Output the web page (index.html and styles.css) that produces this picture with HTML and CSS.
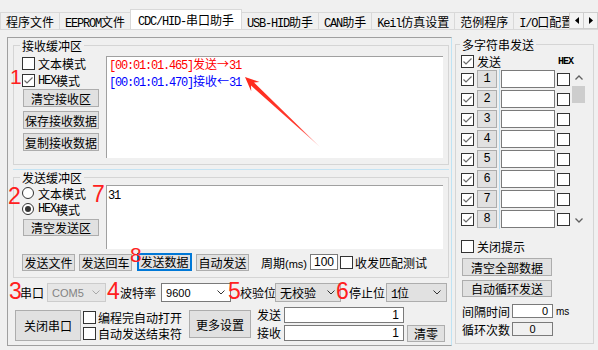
FILE: index.html
```html
<!DOCTYPE html>
<html lang="zh-CN">
<head>
<meta charset="utf-8">
<title>CDC/HID-串口助手</title>
<link rel="stylesheet" href="styles.css">
</head>
<body>
<div class="app">
  <div class="tabs">
    <div class="tab">程序文件</div>
    <div class="tab"><span class="a">EEPROM</span>文件</div>
    <div class="tab active"><span class="a">CDC/HID-</span>串口助手</div>
    <div class="tab"><span class="a">USB-HID</span>助手</div>
    <div class="tab"><span class="a">CAN</span>助手</div>
    <div class="tab"><span class="a">Keil</span>仿真设置</div>
    <div class="tab">范例程序</div>
    <div class="tab"><span class="a">I/O</span>口配置</div>
    <div class="tab-scroll">
      <span class="ts-btn"><svg width="4" height="7" viewBox="0 0 4 7"><path d="M4 0 L0 3.5 L4 7 Z" fill="#000"/></svg></span>
      <span class="ts-btn"><svg width="4" height="7" viewBox="0 0 4 7"><path d="M0 0 L4 3.5 L0 7 Z" fill="#000"/></svg></span>
    </div>
  </div>

  <div class="main">
    <div class="left">
      <div class="group recv">
        <div class="group-title">接收缓冲区</div>
        <div class="group-body">
          <div class="side">
            <div class="opt"><span class="cb"></span>文本模式</div>
            <div class="opt"><span class="cb"><svg width="11" height="11" viewBox="0 0 11 11"><path d="M1.5 5.5 L4 8 L9.5 2.5" fill="none" stroke="#6a6a6a" stroke-width="1.2"/></svg></span><span class="a">HEX</span>模式</div>
            <button class="btn side-btn">清空接收区</button>
            <button class="btn side-btn">保存接收数据</button>
            <button class="btn side-btn">复制接收数据</button>
          </div>
          <div class="text-area recv-area">
            <div class="line first red"><span class="ts">[00:01:01.465]</span>发送→<span class="ts">31</span></div>
            <div class="line blue"><span class="ts">[00:01:01.470]</span>接收←<span class="ts">31</span></div>
            <svg class="arrow" width="90" height="78" viewBox="0 0 90 78">
              <defs>
                <linearGradient id="ag" x1="0" y1="0" x2="1" y2="1">
                  <stop offset="0" stop-color="#ff2a1c"/>
                  <stop offset="0.7" stop-color="#ff3a2e"/>
                  <stop offset="1" stop-color="#ffb3b0"/>
                </linearGradient>
              </defs>
              <path d="M8 2 L22.5 7 L17 7.6 L83 72 L14 10.6 L14.2 16.2 Z" fill="url(#ag)"/>
            </svg>
          </div>
        </div>
      </div>

      <div class="split"></div>

      <div class="group send">
        <div class="group-title">发送缓冲区</div>
        <div class="group-body">
          <div class="side">
            <div class="opt"><span class="rb"></span>文本模式</div>
            <div class="opt"><span class="rb on"></span><span class="a">HEX</span>模式</div>
            <button class="btn side-btn clear-send">清空发送区</button>
          </div>
          <div class="text-area send-area"><span class="a">31</span></div>
        </div>
        <div class="send-actions">
          <button class="btn act-btn">发送文件</button>
          <button class="btn act-btn">发送回车</button>
          <button class="btn act-btn focus">发送数据</button>
          <button class="btn act-btn">自动发送</button>
          <span class="period">周期<span class="small">(ms)</span></span>
          <span class="edit period-input">100</span>
          <span class="opt match"><span class="cb"></span>收发匹配测试</span>
        </div>
      </div>

      <div class="port-row">
        <span class="lbl l-port">串口</span>
        <span class="combo disabled c-port"><span class="cv">COM5</span><svg width="8" height="5" viewBox="0 0 8 5"><path d="M0.5 0.5 L4 4 L7.5 0.5" fill="none" stroke="#a8a8a8"/></svg></span>
        <span class="lbl l-baud">波特率</span>
        <span class="combo white c-baud"><span class="cv">9600</span><svg width="8" height="5" viewBox="0 0 8 5"><path d="M0.5 0.5 L4 4 L7.5 0.5" fill="none" stroke="#333"/></svg></span>
        <span class="lbl l-parity">校验位</span>
        <span class="combo c-parity"><span>无校验</span><svg width="8" height="5" viewBox="0 0 8 5"><path d="M0.5 0.5 L4 4 L7.5 0.5" fill="none" stroke="#333"/></svg></span>
        <span class="lbl l-stop">停止位</span>
        <span class="combo c-stop"><span><span class="a">1</span>位</span><svg width="8" height="5" viewBox="0 0 8 5"><path d="M0.5 0.5 L4 4 L7.5 0.5" fill="none" stroke="#333"/></svg></span>
      </div>

      <div class="ctrl-row">
        <button class="btn close-btn">关闭串口</button>
        <div class="cb-col">
          <div class="opt"><span class="cb"></span>编程完自动打开</div>
          <div class="opt"><span class="cb"></span>自动发送结束符</div>
        </div>
        <button class="btn more-btn">更多设置</button>
        <div class="counters">
          <span class="clbl">发送</span>
          <span class="edit count">1</span>
          <span></span>
          <span class="clbl">接收</span>
          <span class="edit count">1</span>
          <button class="btn zero-btn">清零</button>
        </div>
      </div>

      <span class="anno an1">1</span>
      <span class="anno an2">2</span>
      <span class="anno an7">7</span>
      <span class="anno an8">8</span>
      <span class="anno an3">3</span>
      <span class="anno an4">4</span>
      <span class="anno an5">5</span>
      <span class="anno an6">6</span>
    </div>

    <div class="group multi">
      <div class="group-title">多字符串发送</div>
      <div class="ms-head">
        <span class="cb"><svg width="11" height="11" viewBox="0 0 11 11"><path d="M1.5 5.5 L4 8 L9.5 2.5" fill="none" stroke="#6a6a6a" stroke-width="1.2"/></svg></span>
        <span class="ms-send">发送</span>
        <span class="hex">HEX</span>
      </div>
      <div class="ms-body">
        <div class="ms-rows">
          <div class="ms-row"><span class="cb"><svg width="11" height="11" viewBox="0 0 11 11"><path d="M1.5 5.5 L4 8 L9.5 2.5" fill="none" stroke="#6a6a6a" stroke-width="1.2"/></svg></span><button class="btn num">1</button><span class="ms-cell"><span class="edit ms-input"></span></span><span class="cb hexcb"></span></div>
          <div class="ms-row"><span class="cb"><svg width="11" height="11" viewBox="0 0 11 11"><path d="M1.5 5.5 L4 8 L9.5 2.5" fill="none" stroke="#6a6a6a" stroke-width="1.2"/></svg></span><button class="btn num">2</button><span class="ms-cell"><span class="edit ms-input"></span></span><span class="cb hexcb"></span></div>
          <div class="ms-row"><span class="cb"><svg width="11" height="11" viewBox="0 0 11 11"><path d="M1.5 5.5 L4 8 L9.5 2.5" fill="none" stroke="#6a6a6a" stroke-width="1.2"/></svg></span><button class="btn num">3</button><span class="ms-cell"><span class="edit ms-input"></span></span><span class="cb hexcb"></span></div>
          <div class="ms-row"><span class="cb"><svg width="11" height="11" viewBox="0 0 11 11"><path d="M1.5 5.5 L4 8 L9.5 2.5" fill="none" stroke="#6a6a6a" stroke-width="1.2"/></svg></span><button class="btn num">4</button><span class="ms-cell"><span class="edit ms-input"></span></span><span class="cb hexcb"></span></div>
          <div class="ms-row"><span class="cb"><svg width="11" height="11" viewBox="0 0 11 11"><path d="M1.5 5.5 L4 8 L9.5 2.5" fill="none" stroke="#6a6a6a" stroke-width="1.2"/></svg></span><button class="btn num">5</button><span class="ms-cell"><span class="edit ms-input"></span></span><span class="cb hexcb"></span></div>
          <div class="ms-row"><span class="cb"><svg width="11" height="11" viewBox="0 0 11 11"><path d="M1.5 5.5 L4 8 L9.5 2.5" fill="none" stroke="#6a6a6a" stroke-width="1.2"/></svg></span><button class="btn num">6</button><span class="ms-cell"><span class="edit ms-input"></span></span><span class="cb hexcb"></span></div>
          <div class="ms-row"><span class="cb"><svg width="11" height="11" viewBox="0 0 11 11"><path d="M1.5 5.5 L4 8 L9.5 2.5" fill="none" stroke="#6a6a6a" stroke-width="1.2"/></svg></span><button class="btn num">7</button><span class="ms-cell"><span class="edit ms-input"></span></span><span class="cb hexcb"></span></div>
          <div class="ms-row"><span class="cb"><svg width="11" height="11" viewBox="0 0 11 11"><path d="M1.5 5.5 L4 8 L9.5 2.5" fill="none" stroke="#6a6a6a" stroke-width="1.2"/></svg></span><button class="btn num">8</button><span class="ms-cell"><span class="edit ms-input"></span></span><span class="cb hexcb"></span></div>
        </div>
        <div class="ms-scroll">
          <span class="sb-btn"><svg width="8" height="5" viewBox="0 0 8 5"><path d="M0.5 4.5 L4 1 L7.5 4.5" fill="none" stroke="#606060" stroke-width="1.3"/></svg></span>
          <span class="sb-thumb"></span>
          <span class="sb-space"></span>
          <span class="sb-btn"><svg width="8" height="5" viewBox="0 0 8 5"><path d="M0.5 0.5 L4 4 L7.5 0.5" fill="none" stroke="#606060" stroke-width="1.3"/></svg></span>
        </div>
      </div>
      <div class="opt tip"><span class="cb"></span>关闭提示</div>
      <button class="btn wide-btn">清空全部数据</button>
      <button class="btn wide-btn second">自动循环发送</button>
      <div class="ms-field first">
        <span class="flbl">间隔时间</span>
        <span class="edit fval">0</span>
        <span class="unit">ms</span>
      </div>
      <div class="ms-field">
        <span class="flbl">循环次数</span>
        <span class="edit fval readonly">0</span>
      </div>
    </div>
  </div>
</div>
</body>
</html>
```

FILE: styles.css
```css
* { box-sizing: border-box; }
html, body { margin: 0; padding: 0; }
body {
  width: 598px;
  height: 350px;
  overflow: hidden;
  background: #f0f0f0;
  font-family: "Noto Sans CJK SC", "Liberation Sans", sans-serif;
  font-size: 12px;
  color: #000;
}
.app { width: 598px; height: 350px; }

.a {
  font-family: "Liberation Mono", "Noto Sans CJK SC", monospace;
  font-size: 12px;
  letter-spacing: -1.2px;
  line-height: 1;
}

/* ---------- tabs ---------- */
.tabs {
  position: relative;
  height: 30px;
  border-bottom: 1px solid #d9d9d9;
  display: flex;
  align-items: flex-end;
  overflow: hidden;
}
.tab {
  flex: none;
  height: 18px;
  margin: 0 -1px -1px 0;
  padding: 0 5px;
  border: 1px solid #d9d9d9;
  border-bottom: none;
  background: #f0f0f0;
  line-height: 17px;
  white-space: nowrap;
}
.tab.active {
  height: 21px;
  padding: 0 7px;
  background: #fff;
  line-height: 19px;
  position: relative;
  z-index: 1;
}
.tab-scroll {
  position: absolute;
  right: 0;
  top: 12px;
  display: flex;
  z-index: 2;
}
.ts-btn {
  width: 15px;
  height: 17px;
  margin-left: -1px;
  border: 1px solid #cfcfcf;
  background: #f4f4f4;
  display: flex;
  align-items: center;
  justify-content: center;
}

/* ---------- layout ---------- */
.main {
  display: flex;
  align-items: flex-start;
  padding: 7px 0 0 7px;
}
.left {
  position: relative;
  flex: none;
  width: 445px;
  height: 309px;
  border: 1px solid #a0a0a0;
  border-right-color: #bfe3f4;
  padding: 0 2px 0 5px;
  display: flex;
  flex-direction: column;
}

.group {
  flex: none;
  border: 1px solid #d5d5d5;
  display: flex;
  flex-direction: column;
}
.group-title {
  align-self: flex-start;
  height: 15px;
  margin: -8px 0 -7px 6px;
  padding: 0 2px;
  background: #f0f0f0;
  line-height: 15px;
  white-space: nowrap;
  position: relative;
}
.group-body {
  display: flex;
  padding: 10px 5px 0 8px;
}

.side {
  flex: none;
  width: 77px;
  margin-right: 7px;
  display: flex;
  flex-direction: column;
}
.recv .side { margin-top: -1px; }

.opt {
  display: flex;
  align-items: center;
  height: 17px;
  white-space: nowrap;
}
.cb {
  flex: none;
  width: 13px;
  height: 13px;
  margin-right: 3px;
  border: 1px solid #333;
  background: #fff;
  display: flex;
}
.rb {
  flex: none;
  width: 12px;
  height: 12px;
  margin-right: 4px;
  border: 1px solid #333;
  border-radius: 50%;
  background: #fff;
  display: flex;
  align-items: center;
  justify-content: center;
}
.rb.on::after {
  content: "";
  width: 6px;
  height: 6px;
  border-radius: 50%;
  background: #333;
}

.btn {
  font-family: "Noto Sans CJK SC", "Liberation Sans", sans-serif;
  font-size: 12px;
  color: #000;
  border: 1px solid #adadad;
  background: #e1e1e1;
  padding: 0;
  margin: 0;
  line-height: 15px;
  white-space: nowrap;
}
.side-btn {
  width: 76px;
  height: 18px;
  margin-left: 1px;
}
.side-btn + .side-btn { margin-top: 4px; }

.text-area {
  flex: 1;
  position: relative;
  background: #fff;
  border-top: 1px solid #a0a0a0;
  border-left: 1px solid #a0a0a0;
}

/* receive */
.recv { width: 436px; height: 120px; margin-top: 7px; }
.recv-area { height: 102px; padding-left: 2px; }
.line { height: 17px; line-height: 17px; white-space: nowrap; }
.line.first { margin-top: -2px; }
.ts {
  font-family: "Liberation Mono", monospace;
  font-size: 12px;
  letter-spacing: -1.2px;
  line-height: 1;
}
.red { color: #ff0000; }
.blue { color: #0000ff; }
.arrow { position: absolute; left: 130px; top: 18px; }

.split {
  flex: none;
  width: 436px;
  height: 1px;
  margin-top: 4px;
  background: #c4e3f3;
}

/* send */
.send { width: 436px; height: 101px; margin-top: 7px; }
.send .group-body { padding-top: 7px; }
.send .opt { height: 16px; }
.send .side-btn.clear-send { margin-top: 2px; height: 17px; }
.send-area { height: 64px; padding-left: 1px; line-height: 16px; }

.send-actions {
  display: flex;
  align-items: center;
  height: 18px;
  margin-top: 4px;
  padding-left: 8px;
}
.act-btn { width: 53px; height: 17px; margin-right: 4px; }
.act-btn.focus {
  width: 55px;
  height: 18px;
  margin-left: 1px;
  border: 2px solid #0078d7;
  line-height: 14px;
}
.period { margin-left: 8px; white-space: nowrap; }
.small {
  font-family: "Liberation Sans", sans-serif;
  font-size: 11px;
}
.edit {
  display: block;
  background: #fff;
  border: 1px solid #7a7a7a;
}
.period-input {
  width: 28px;
  height: 16px;
  margin-left: 3px;
  font-family: "Liberation Sans", sans-serif;
  font-size: 12px;
  line-height: 14px;
  text-align: center;
}
.match { margin-left: 2px; }
.match .cb { margin-right: 2px; }

/* port row */
.port-row {
  display: flex;
  align-items: center;
  height: 19px;
  margin-top: 5px;
  padding-left: 7px;
  white-space: nowrap;
}
.combo {
  flex: none;
  height: 19px;
  display: flex;
  align-items: center;
  justify-content: space-between;
  padding: 0 5px 0 4px;
  border: 1px solid #adadad;
  background: #e1e1e1;
}
.combo.disabled { background: #e6e6e6; border-color: #cccccc; color: #838383; }
.combo.white { background: #fff; border-color: #7a7a7a; }
.cv { font-family: "Liberation Sans", sans-serif; font-size: 11px; }
.l-port { margin-right: 3px; }
.c-port { width: 59px; }
.l-baud { margin-left: 14px; margin-right: 5px; }
.c-baud { width: 70px; }
.l-parity { margin-left: 9px; margin-right: -1px; }
.c-parity { width: 66px; }
.l-stop { margin-left: 8px; margin-right: 1px; }
.c-stop { width: 61px; }

/* control row */
.ctrl-row {
  display: flex;
  align-items: flex-start;
  margin-top: 5px;
  padding-left: 2px;
}
.close-btn { width: 66px; height: 31px; margin-top: 3px; }
.cb-col { margin: 2px 0 0 2px; }
.cb-col .opt { height: 16px; }
.cb-col .cb { margin-right: 2px; }
.more-btn { width: 62px; height: 28px; margin: 3px 0 0 7px; }
.counters {
  display: grid;
  grid-template-columns: 24px 120px 38px;
  grid-template-rows: 16px 17px;
  column-gap: 3px;
  row-gap: 2px;
  margin-left: 6px;
}
.clbl { line-height: 16px; }
.count {
  height: 16px;
  padding-right: 4px;
  text-align: right;
  font-family: "Liberation Sans", sans-serif;
  font-size: 12px;
  line-height: 14px;
}
.zero-btn { width: 38px; height: 17px; }

/* annotations */
.anno {
  position: absolute;
  color: #ff2020;
  font-family: "Liberation Sans", sans-serif;
  font-size: 23px;
  line-height: 23px;
}
.an1 { left: 2px; top: 28px; font-size: 21px; line-height: 21px; }
.an2 { left: 0; top: 147px; }
.an7 { left: 84px; top: 145px; }
.an8 { left: 122px; top: 206px; font-size: 21px; line-height: 21px; }
.an3 { left: 1px; top: 242px; }
.an4 { left: 99px; top: 242px; }
.an5 { left: 220px; top: 242px; }
.an6 { left: 328px; top: 242px; }

/* multi-string panel */
.multi {
  width: 139px;
  height: 300px;
  margin: 7px 0 0 3px;
  padding-left: 5px;
}
.multi .group-title { margin-left: -1px; }
.ms-head {
  display: flex;
  align-items: center;
  width: 112px;
  height: 13px;
  margin-top: 10px;
}
.ms-send { line-height: 13px; }
.hex {
  margin-left: auto;
  font-family: "Liberation Mono", monospace;
  font-weight: bold;
  font-size: 10px;
  letter-spacing: -1px;
}
.ms-body { display: flex; margin-top: 1px; }
.ms-rows { display: flex; flex-direction: column; }
.ms-row { display: flex; align-items: center; height: 20px; }
.num {
  width: 20px;
  height: 18px;
  margin-right: 2px;
  font-family: "Liberation Mono", monospace;
  font-size: 12px;
}
.ms-cell {
  display: flex;
  align-items: center;
  height: 20px;
  padding-left: 1px;
  border-left: 1px solid #b7dcf0;
}
.ms-input { width: 54px; height: 18px; }
.hexcb { margin: 0 0 0 2px; }
.ms-scroll {
  display: flex;
  flex-direction: column;
  width: 13px;
  height: 160px;
  margin-left: 2px;
}
.sb-btn {
  height: 17px;
  display: flex;
  align-items: center;
  justify-content: center;
}
.sb-thumb { height: 17px; background: #cdcdcd; }
.sb-space { flex: 1; }

.tip { margin-top: 9px; height: 16px; }
.wide-btn { width: 90px; height: 18px; margin: 4px 0 0 1px; }
.wide-btn.second { height: 17px; }
.ms-field {
  display: flex;
  align-items: center;
  height: 16px;
  margin: 2px 0 0 1px;
  white-space: nowrap;
}
.ms-field.first { margin-top: 6px; }
.flbl { width: 48px; margin-right: 2px; }
.fval {
  width: 41px;
  height: 14px;
  padding-right: 4px;
  text-align: right;
  font-family: "Liberation Sans", sans-serif;
  font-size: 11px;
  line-height: 12px;
}
.fval.readonly { background: #f0f0f0; text-align: center; padding-right: 0; }
.unit {
  margin-left: 3px;
  font-family: "Liberation Sans", sans-serif;
  font-size: 10px;
}
```
